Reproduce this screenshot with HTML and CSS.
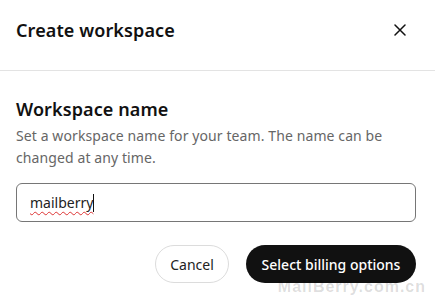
FILE: index.html
```html
<!DOCTYPE html>
<html lang="en">
<head>
    <meta charset="UTF-8">
    <meta name="viewport" content="width=device-width, initial-scale=1.0">
    <title>Create workspace</title>
    <link rel="stylesheet" href="styles.css">
</head>
<body>
    <div class="dialog">
        <div class="dialog-header">
            <h2>Create workspace</h2>
            <button class="close-button" aria-label="Close">
                <svg width="12" height="12" viewBox="0 0 12 12"><path d="M1 1L11 11M11 1L1 11" stroke="#111" stroke-width="1.5" stroke-linecap="round"/></svg>
            </button>
        </div>

        <div class="dialog-body">
            <h3>Workspace name</h3>
            <p class="hint">Set a workspace name for your team. The name can be changed at any time.</p>
            <div class="name-input" role="textbox"><span class="typo">mailberry</span><span class="caret"></span></div>
        </div>

        <div class="dialog-footer">
            <button class="cancel-button">Cancel</button>
            <button class="submit-button">Select billing options</button>
        </div>
        <div class="watermark">MailBerry.com.cn</div>
    </div>
</body>
</html>
```

FILE: styles.css
```css
body {
    margin: 0;
    background: #fff;
    color: #111;
    font-family: "Noto Sans", "Open Sans", sans-serif;
}

.dialog {
    width: 435px;
    height: 305px;
    position: relative;
    overflow: hidden;
}

.dialog-header {
    height: 71px;
    box-sizing: border-box;
    padding: 0 29px 10px 16px;
    display: flex;
    align-items: center;
    justify-content: space-between;
    border-bottom: 1px solid #e3e3e3;
}

.dialog-header h2 {
    margin: 0;
    font-size: 18px;
    font-weight: 600;
    letter-spacing: 0.1px;
}

.close-button {
    background: none;
    border: none;
    padding: 0;
    width: 12px;
    height: 12px;
    display: flex;
    cursor: pointer;
}

.dialog-body {
    padding: 25px 19px 0 16px;
}

.dialog-body h3 {
    margin: 0;
    font-size: 18px;
    font-weight: 600;
    line-height: 26px;
    letter-spacing: 0.1px;
}

.hint {
    margin: 3px 0 0;
    font-size: 14px;
    line-height: 22px;
    color: #666;
    letter-spacing: 0.1px;
}

.name-input {
    margin-top: 14px;
    height: 39px;
    box-sizing: border-box;
    border: 1px solid #767676;
    border-radius: 6px;
    padding: 0 13px;
    display: flex;
    align-items: center;
    font-size: 14px;
    color: #222;
}

.typo {
    text-decoration: underline wavy #d33;
    text-decoration-thickness: 1px;
    text-underline-offset: 3px;
}

.caret {
    width: 1px;
    height: 18px;
    background: #111;
}

.dialog-footer {
    display: flex;
    justify-content: flex-end;
    gap: 17px;
    padding: 23px 19px 0 16px;
}

.cancel-button,
.submit-button {
    height: 38px;
    border-radius: 19px;
    font-family: inherit;
    font-size: 14px;
    cursor: pointer;
}

.cancel-button {
    width: 74px;
    background: #fff;
    border: 1px solid #dcdcdc;
    color: #222;
}

.submit-button {
    width: 170px;
    background: #111;
    border: none;
    color: #fff;
    font-weight: 500;
}

.watermark {
    position: absolute;
    right: 9px;
    bottom: 10px;
    font-family: "Liberation Sans", sans-serif;
    font-size: 16px;
    line-height: 16px;
    font-weight: bold;
    letter-spacing: 1px;
    color: rgba(0, 0, 0, 0.14);
}
```
